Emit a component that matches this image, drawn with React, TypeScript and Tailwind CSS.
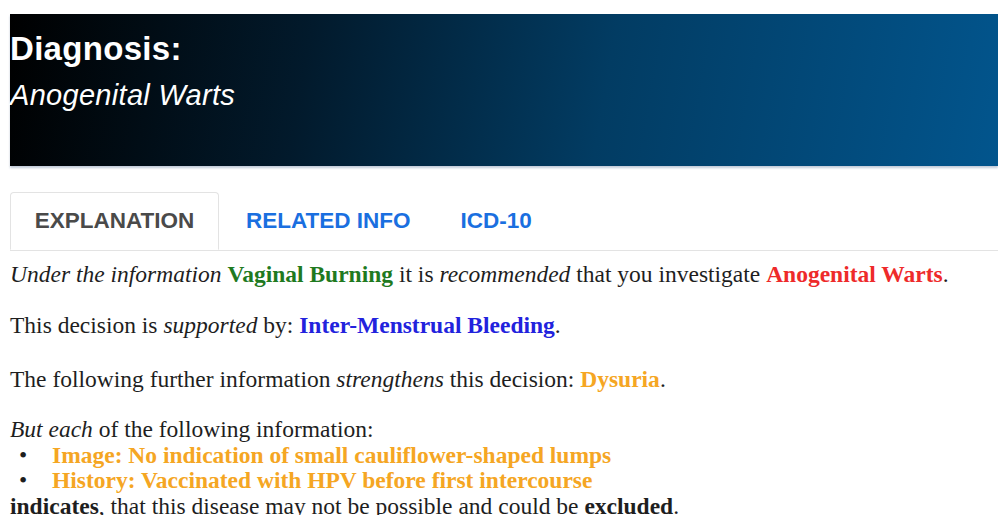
const serif = "font-[family-name:'Liberation_Serif','Times_New_Roman',serif]";

function Tab({ label, active = false }: { label: string; active?: boolean }) {
  if (active) {
    return (
      <div className="-mb-px flex h-[58px] w-[209px] items-center justify-center rounded-t-[4px] border border-b-white border-[#e3e3e3] bg-white text-[22.5px] font-bold text-[#4a4a4a]">
        {label}
      </div>
    );
  }
  return (
    <div className="flex h-[58px] items-center px-[25px] text-[22.5px] font-bold text-[#1a6fe0]">
      {label}
    </div>
  );
}

export default function App() {
  return (
    <div className="min-h-[515px] bg-white pt-[14px] pl-[10px] font-[family-name:'Liberation_Sans',Arial,sans-serif]">
      {/* diagnosis banner */}
      <header className="h-[152px] bg-[linear-gradient(100deg,#000000_0%,#021a2c_30%,#023c63_60%,#02558d_100%)] pt-[16px] text-white shadow-[0_2px_2px_rgba(120,140,170,0.45)]">
        <h1 className="text-[33px] font-bold leading-[38px] tracking-[0.3px]">Diagnosis:</h1>
        <p className="mt-[10px] text-[29px] italic leading-[34px] tracking-[0.3px]">Anogenital Warts</p>
      </header>

      {/* tabs */}
      <nav className="mt-[26px] flex border-b border-[#e3e3e3]">
        <Tab label="EXPLANATION" active />
        <div className="w-[2px]" />
        <Tab label="RELATED INFO" />
        <Tab label="ICD-10" />
      </nav>

      {/* explanation text */}
      <div className={`${serif} pt-[11px] text-[23.5px] leading-[25.5px] text-[#1e1e1e]`}>
        <p>
          <i>Under the information</i> <b className="text-[#1f7a1f]">Vaginal Burning</b> it is{" "}
          <i>recommended</i> that you investigate <b className="text-[#ee2a2a]">Anogenital Warts</b>.
        </p>
        <p className="mt-[25.5px]">
          This decision is <i>supported</i> by: <b className="text-[#2222dd]">Inter-Menstrual Bleeding</b>.
        </p>
        <p className="mt-[28px]">
          The following further information <i>strengthens</i> this decision:{" "}
          <b className="text-[#f5a623]">Dysuria</b>.
        </p>
        <div className="mt-[25px]">
          <p>
            <i>But each</i> of the following information:
          </p>
          <ul>
            <li className="flex">
              <span className="w-[42px] pl-[9px]">•</span>
              <b className="text-[#f5a623]">Image: No indication of small cauliflower-shaped lumps</b>
            </li>
            <li className="flex">
              <span className="w-[42px] pl-[9px]">•</span>
              <b className="text-[#f5a623]">History: Vaccinated with HPV before first intercourse</b>
            </li>
          </ul>
          <p>
            <b>indicates</b>, that this disease <u>may not be possible</u> and could be <b>excluded</b>.
          </p>
        </div>
      </div>
    </div>
  );
}
